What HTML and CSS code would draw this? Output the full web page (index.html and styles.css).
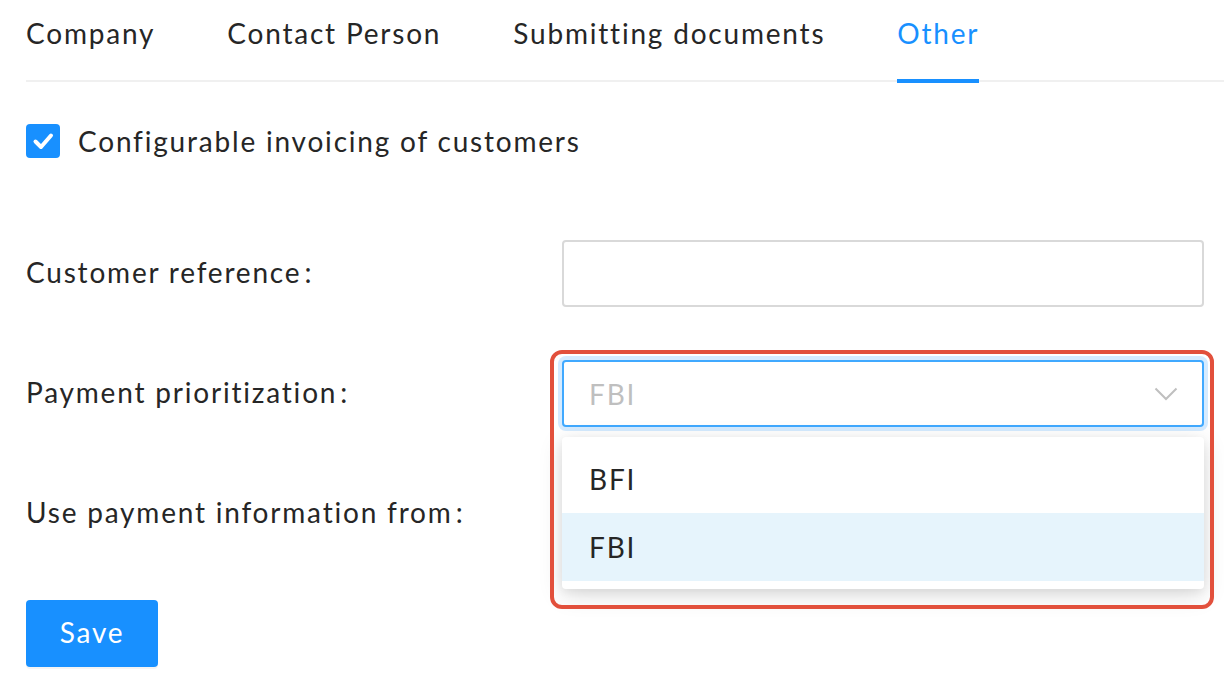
FILE: index.html
```html
<!DOCTYPE html>
<html lang="en">
<head>
<meta charset="utf-8">
<title>Other</title>
<link rel="stylesheet" href="styles.css">
</head>
<body>
<div class="page">
  <nav class="tabs">
    <div class="tab">Company</div>
    <div class="tab">Contact Person</div>
    <div class="tab">Submitting documents</div>
    <div class="tab active">Other</div>
  </nav>

  <label class="check-row">
    <span class="checkbox">
      <svg viewBox="0 0 34 34" width="34" height="34"><path d="M9.5 17.5 L15 23 L25 11.5" fill="none" stroke="#fff" stroke-width="4" stroke-linecap="round" stroke-linejoin="round"/></svg>
    </span>
    <span class="check-label">Configurable invoicing of customers</span>
  </label>

  <div class="form">
    <div class="row">
      <div class="label">Customer reference<span class="colon">:</span></div>
      <div class="control"><div class="input"></div></div>
    </div>
    <div class="row">
      <div class="label">Payment prioritization<span class="colon">:</span></div>
      <div class="control select-wrap">
        <div class="highlight"></div>
        <div class="select">
          <span class="placeholder">FBI</span>
          <svg class="chev" viewBox="0 0 24 14" width="24" height="14"><path d="M1.5 1.5 L12 12 L22.5 1.5" fill="none" stroke="#bfbfbf" stroke-width="2"/></svg>
        </div>
        <div class="dropdown">
          <div class="option">BFI</div>
          <div class="option selected">FBI</div>
        </div>
      </div>
    </div>
    <div class="row">
      <div class="label">Use payment information from<span class="colon">:</span></div>
      <div class="control"></div>
    </div>
  </div>

  <button class="save">Save</button>
</div>
</body>
</html>
```

FILE: styles.css
```css
* { box-sizing: border-box; }
html, body { margin: 0; padding: 0; background: #fff; }
body {
  font-family: "Lato", "Open Sans", sans-serif;
  color: #262626;
  font-size: 28px;
  letter-spacing: 1.8px;
}
.page { padding-left: 26px; width: 1224px; height: 685px; overflow: hidden; }

.tabs {
  display: flex;
  gap: 72px;
  height: 82px;
  border-bottom: 2px solid #f0f0f0;
}
.tab {
  position: relative;
  line-height: 67px;
  font-size: 28px;
  color: #262626;
}
.tab.active { color: #1890ff; }
.tab.active::after {
  content: "";
  position: absolute;
  left: 0; right: 0;
  bottom: -3px;
  height: 4px;
  background: #1890ff;
}

.check-row {
  display: flex;
  align-items: center;
  gap: 18px;
  margin-top: 42px;
  height: 34px;
}
.checkbox {
  width: 34px; height: 34px;
  border-radius: 4px;
  background: #1890ff;
  display: flex;
}
.check-label { font-size: 28px; }

.form { margin-top: 82px; padding-right: 20px; }
.row {
  display: flex;
  align-items: center;
  height: 67px;
  margin-bottom: 53px;
}
.label { width: 536px; font-size: 28px; line-height: 1; padding-bottom: 3px; }
.colon { margin-left: 3px; }
.control { flex: 1; height: 67px; }
.input {
  height: 67px;
  border: 2px solid #d9d9d9;
  border-radius: 4px;
}
.select-wrap { position: relative; }
.select {
  height: 67px;
  border: 2px solid #40a9ff;
  border-radius: 4px;
  box-shadow: 0 0 0 4px rgba(24,144,255,0.18);
  display: flex;
  align-items: center;
  justify-content: space-between;
  padding: 0 24px 0 25px;
  background: #fff;
}
.placeholder { color: #bfbfbf; }
.chev { display: block; }
.highlight {
  position: absolute;
  left: -12px; right: -10px;
  top: -10px;
  height: 259px;
  border: 4px solid #e2503c;
  border-radius: 12px;
  pointer-events: none;
  z-index: 3;
}
.dropdown {
  position: absolute;
  left: 0; right: 0;
  top: 77px;
  padding: 8px 0;
  background: #fff;
  border-radius: 4px;
  box-shadow: 0 6px 24px rgba(0,0,0,0.14), 0 3px 8px rgba(0,0,0,0.06);
  z-index: 2;
}
.option {
  height: 68px;
  line-height: 68px;
  padding-left: 27px;
  color: #262626;
}
.option.selected { background: #e6f4fc; }

.save {
  display: block;
  margin-top: 0;
  width: 132px;
  height: 67px;
  border: 0;
  border-radius: 4px;
  background: #1890ff;
  color: #fff;
  font-family: inherit;
  letter-spacing: 1.8px;
  font-size: 28px;
  padding: 0 0 3px;
  box-shadow: 0 2px 0 rgba(0,0,0,0.045);
}
```
